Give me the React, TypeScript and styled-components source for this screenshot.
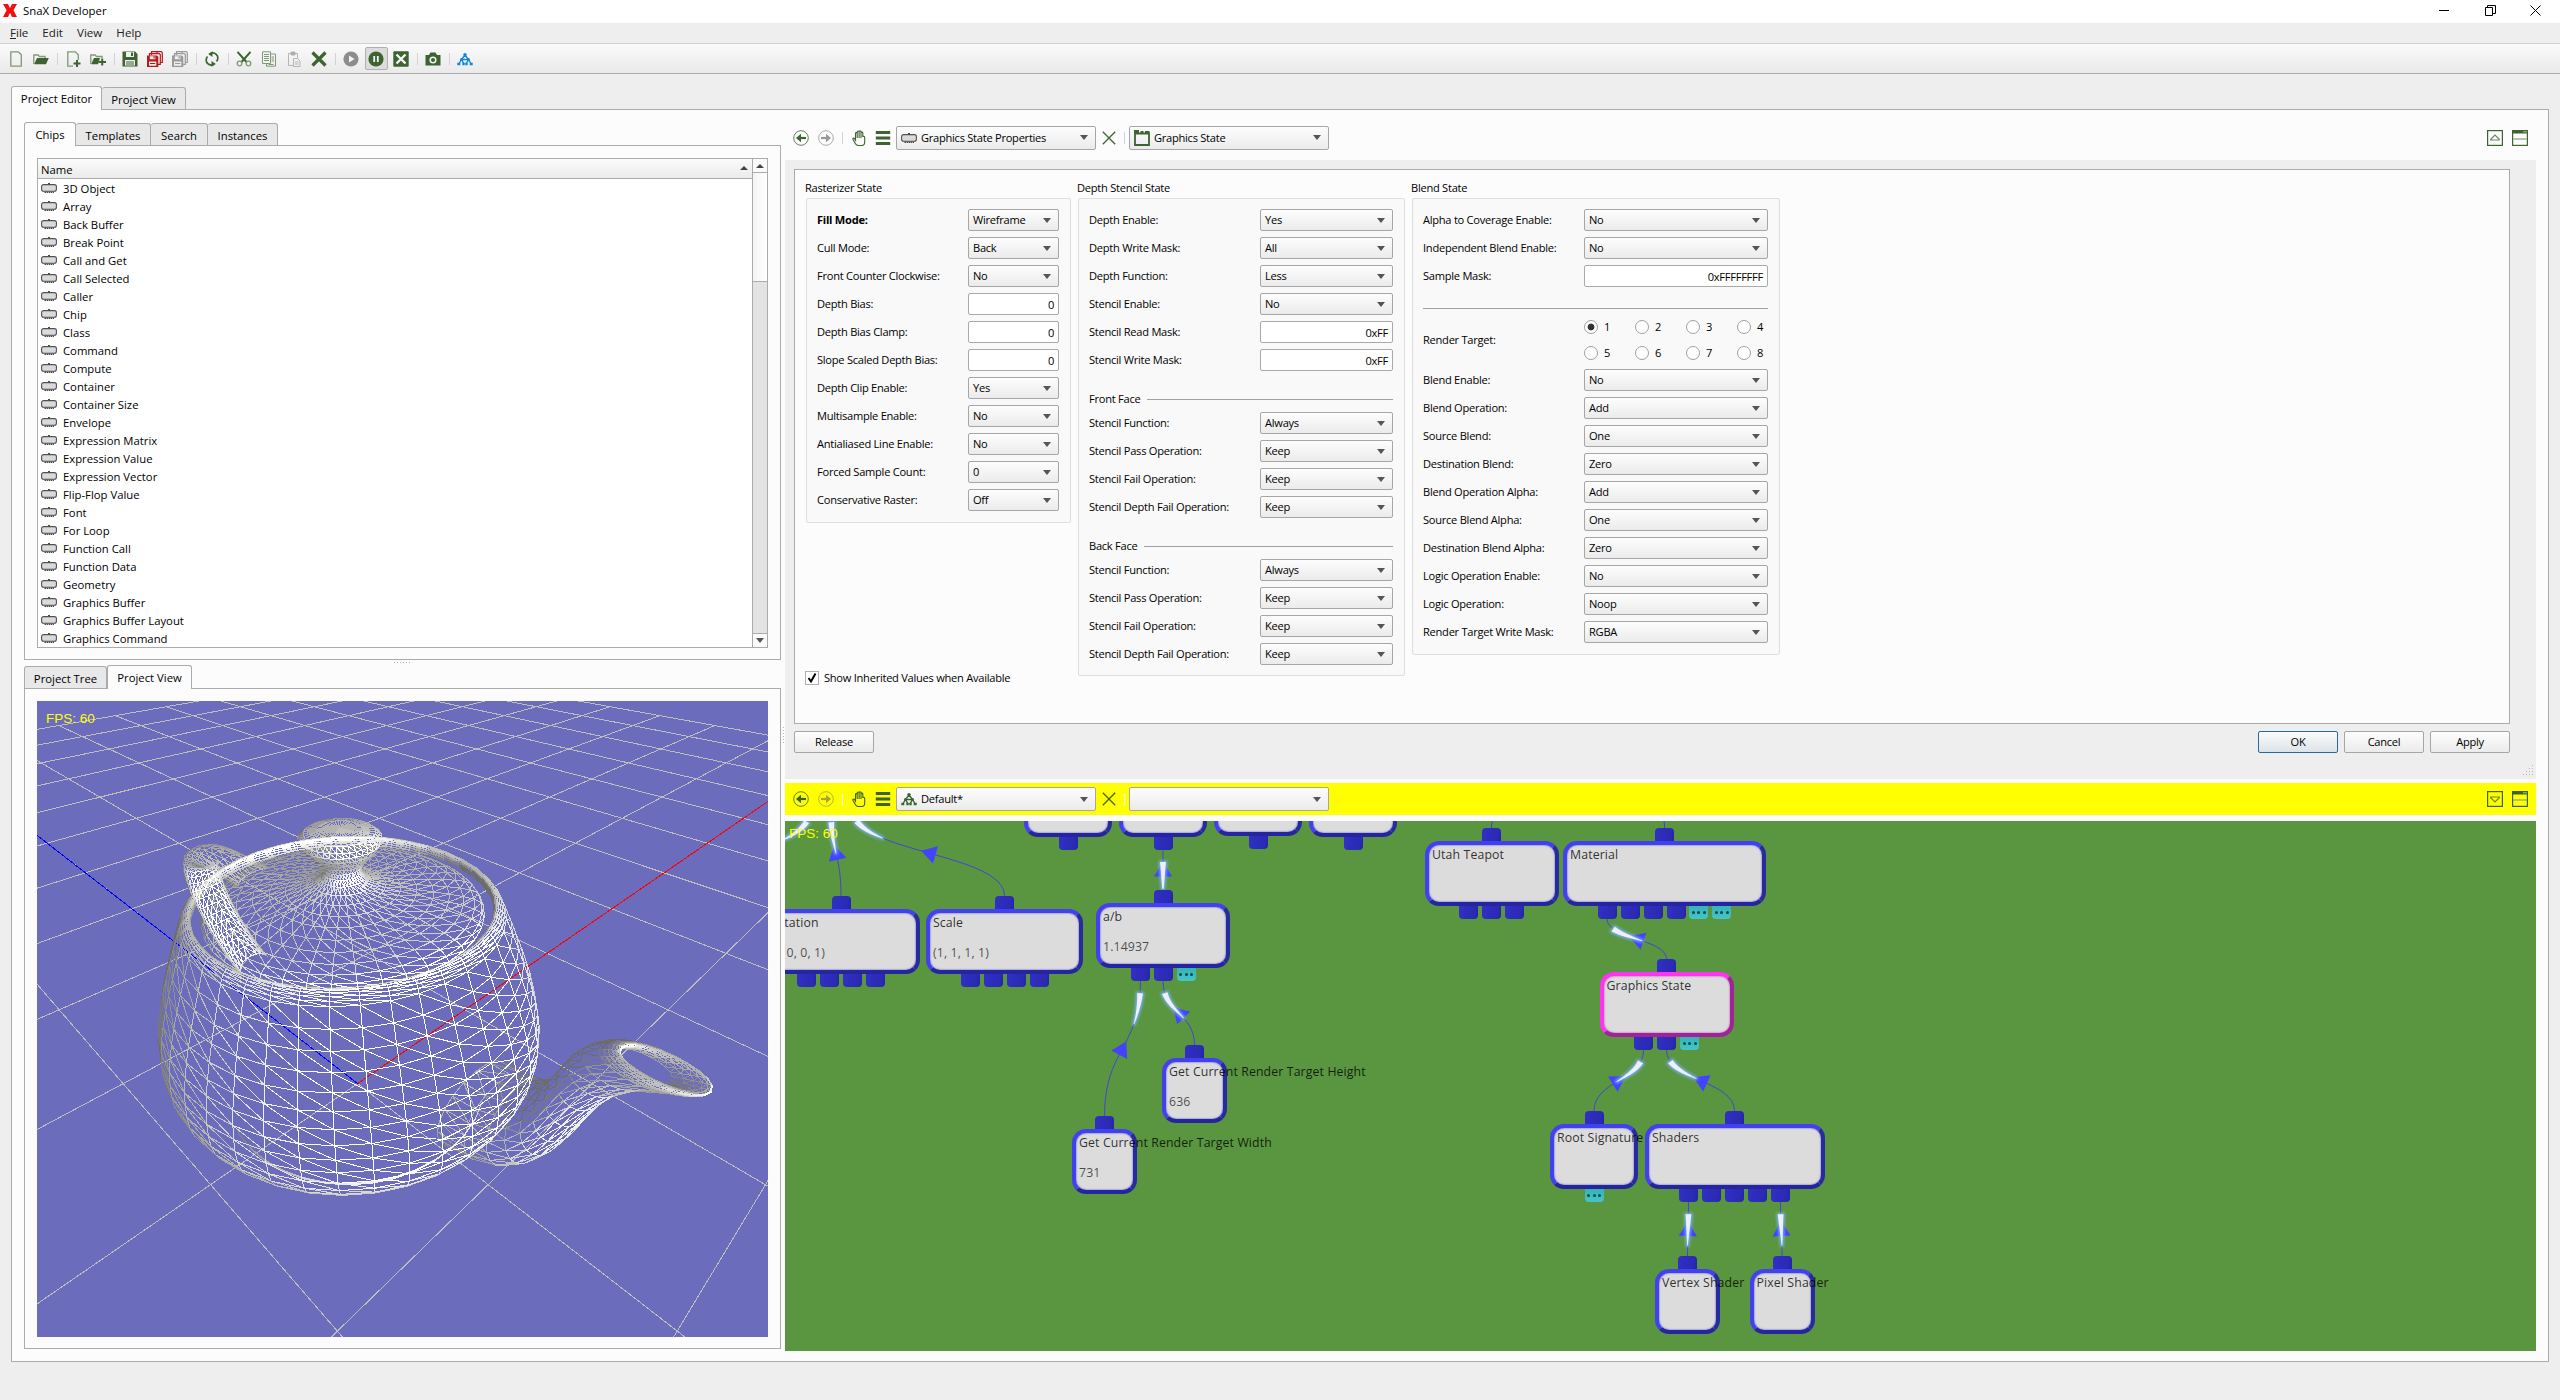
import React from 'react';
import styled, { createGlobalStyle, css } from 'styled-components';

const GREEN = '#3c6330';
const LINE = '#ababab';

const Global = createGlobalStyle`
  body { margin: 0; background: #eeeeee; overflow: hidden; }
  * { box-sizing: border-box; }
`;

const Window = styled.div`
  width: 2560px;
  height: 1400px;
  background: #eeeeee;
  display: flex;
  flex-direction: column;
  font-family: 'Open Sans', 'Noto Sans', sans-serif;
  font-size: 11.3px;
  line-height: 16px;
  color: #000;
  white-space: nowrap;
  overflow: hidden;
`;

const TitleBar = styled.header`
  height: 23px;
  background: #fff;
  display: flex;
  align-items: center;
  padding: 0 19px 2px 3px;
`;
const AppTitle = styled.span`
  margin-left: 6px;
  padding-top: 1px;
  flex: 1;
  font-size: 11.4px;
`;
const Controls = styled.div`
  display: flex;
  gap: 34.5px;
  margin-top: -1px;
`;

const MenuBar = styled.nav`
  height: 20px;
  display: flex;
  gap: 14px;
  padding: 2px 10px 0;
  font-size: 11.6px;
  color: #222;
`;
const MenuItem = styled.span`
  display: block;
  &::first-letter { text-decoration: ${(p: { $mark?: boolean }) => (p.$mark ? 'underline' : 'none')}; }
`;

const ToolBar = styled.div`
  height: 31px;
  border-top: 1px solid #d0d0d0;
  border-bottom: 1px solid ${LINE};
  background: linear-gradient(#fafafa, #eaeaea);
  display: flex;
  align-items: center;
  padding-left: 3.5px;
`;
const ToolSlot = styled.span<{ $on?: boolean }>`
  width: 25px;
  height: 23px;
  display: flex;
  align-items: center;
  justify-content: center;
  ${(p) =>
    p.$on &&
    css`
      width: 23px;
      margin: 0 1px;
      background: #dcdcdc;
      border: 1px solid #b0b0b0;
      border-radius: 2px;
    `}
`;
const ToolSep = styled.i`
  width: 1px;
  height: 12px;
  margin: 0 3px;
  background: #d2d2d2;
`;

const Body = styled.main`
  flex: 1;
  padding: 12px 11px 0 11px;
  display: flex;
  flex-direction: column;
`;
const Tabs = styled.div`
  display: flex;
  align-items: flex-end;
  height: 24px;
  margin-bottom: -1px;
`;
const Tab = styled.div<{ $w: number; $on?: boolean }>`
  width: ${(p) => p.$w}px;
  height: ${(p) => (p.$on ? 24 : 22)}px;
  margin-bottom: ${(p) => (p.$on ? 0 : 1)}px;
  padding-top: ${(p) => (p.$on ? 1 : 2)}px;
  border: 1px solid ${LINE};
  border-bottom: 0;
  border-left-width: ${(p) => (p.$on ? 1 : 0)}px;
  border-radius: 3px 3px 0 0;
  background: ${(p) => (p.$on ? '#fcfcfc' : '#e8e8e8')};
  z-index: ${(p) => (p.$on ? 1 : 0)};
  display: flex;
  align-items: center;
  justify-content: center;
  &:first-child { border-left-width: 1px; }
`;

const MainPane = styled.section`
  width: 2538px;
  height: 1253px;
  border: 1px solid ${LINE};
  background: #fcfcfc;
  display: flex;
`;
const LeftColumn = styled.div`
  width: 757px;
  margin: 12px 4px 0 12px;
  display: flex;
  flex-direction: column;
`;
const TabPane = styled.div<{ $h: number }>`
  height: ${(p) => p.$h}px;
  border: 1px solid ${LINE};
  padding: 12px;
  background: #fcfcfc;
`;
const Dots = styled.div<{ $vertical?: boolean }>`
  width: ${(p) => (p.$vertical ? 1 : 18)}px;
  height: ${(p) => (p.$vertical ? 18 : 1)}px;
  align-self: center;
  background: repeating-linear-gradient(${(p) => (p.$vertical ? 180 : 90)}deg, #b5b5b5 0 1px, transparent 1px 3px);
`;
const PaneSplit = styled.div`
  height: 5px;
  display: flex;
  flex-direction: column;
  justify-content: center;
`;

const Table = styled.div`
  width: 731px;
  height: 490px;
  border: 1px solid ${LINE};
  background: #fff;
  display: flex;
`;
const TableMain = styled.div`
  flex: 1;
  overflow: hidden;
`;
const TableHead = styled.div`
  height: 20px;
  padding: 3px 4px 0 3px;
  display: flex;
  justify-content: space-between;
  border-bottom: 1px solid ${LINE};
  background: linear-gradient(#fbfbfb, #ebebeb);
  svg { margin-top: 4px; }
`;
const TableRow = styled.div`
  height: 18px;
  display: flex;
  align-items: center;
  gap: 6px;
  padding: 2px 0 0 3px;
  svg { margin-bottom: 2px; }
`;
const Scroll = styled.div`
  width: 15px;
  border-left: 1px solid ${LINE};
  background: #e3e3e3;
  display: flex;
  flex-direction: column;
`;
const ScrollButton = styled.div`
  height: 14px;
  background: #fafafa;
  display: flex;
  align-items: center;
  justify-content: center;
  border-bottom: 1px solid ${LINE};
  &:last-child { border-bottom: 0; border-top: 1px solid ${LINE}; }
`;
const ScrollThumb = styled.div`
  height: 109px;
  margin-bottom: auto;
  border-bottom: 1px solid ${LINE};
  background: linear-gradient(90deg, #f4f4f4, #fff);
`;

const SideSplit = styled.div`
  width: 4px;
  margin-left: -4px;
  display: flex;
  align-items: center;
  justify-content: center;
`;
const RightColumn = styled.div`
  width: 1751px;
  display: flex;
  flex-direction: column;
  font-size: 11.1px;
  letter-spacing: -0.26px;
`;
const ColumnGap = styled.div`
  height: 4px;
`;
const EditorBar = styled.div<{ $hot?: boolean }>`
  height: ${(p) => (p.$hot ? 32 : 50)}px;
  padding: ${(p) => (p.$hot ? '0' : '5px')} 8px 0 8px;
  background: ${(p) => (p.$hot ? '#ffff00' : '#fcfcfc')};
  display: flex;
  align-items: center;
`;
const BarIcon = styled.span<{ $gap: number; $before?: number }>`
  display: flex;
  width: 16px;
  margin-left: ${(p) => p.$before ?? 0}px;
  margin-right: ${(p) => p.$gap}px;
`;
const BarSep = styled.i<{ $gap: number; $light?: boolean }>`
  width: 1px;
  height: 12px;
  margin-right: ${(p) => p.$gap}px;
  background: ${(p) => (p.$light ? '#fff' : '#d2d2d2')};
`;

const comboLook = css`
  border: 1px solid #a6a6a6;
  border-radius: 2px;
  background: linear-gradient(#fdfdfd, #ebebeb);
`;
const ComboBox = styled.div<{ $w: number; $h?: number }>`
  ${comboLook}
  width: ${(p) => p.$w}px;
  height: ${(p) => p.$h ?? 22}px;
  padding: 0 7px 0 4px;
  display: flex;
  align-items: center;
  gap: 4px;
  span { flex: 1; }
`;
const Field = styled.div<{ $w: number }>`
  width: ${(p) => p.$w}px;
  height: 22px;
  border: 1px solid #a9a9a9;
  border-radius: 2px;
  background: #fff;
  padding: 3px 4px 0 0;
  text-align: right;
`;
const Push = styled.button<{ $focus?: boolean }>`
  ${comboLook}
  width: 80px;
  height: 22px;
  padding: 0 0 1px;
  font: inherit;
  letter-spacing: inherit;
  color: inherit;
  ${(p) =>
    p.$focus &&
    css`
      border-color: #2a6a99;
      background: linear-gradient(#fafbfc, #dce3e8);
    `}
`;

const Properties = styled.div`
  height: 619px;
  background: #eeeeee;
  padding: 9px 10px 0 9px;
  display: flex;
  flex-direction: column;
`;
const Sheet = styled.div`
  width: 1716px;
  height: 555px;
  border: 1px solid ${LINE};
  background: #fcfcfc;
  padding: 10px 10px 0 11px;
  display: flex;
  align-items: flex-start;
  gap: 7px;
`;
const StackColumn = styled.div`
  height: 506px;
  display: flex;
  flex-direction: column;
  justify-content: space-between;
`;
const Group = styled.div``;
const GroupTitle = styled.div`
  height: 18px;
  line-height: 16px;
  margin-left: -1px;
`;
const GroupBox = styled.div<{ $w: number; $h: number }>`
  width: ${(p) => p.$w}px;
  height: ${(p) => p.$h}px;
  border: 1px solid #dedede;
  border-radius: 2px;
  background: #f9f9f9;
  padding: 10px 11px 0 10px;
  display: flex;
  flex-direction: column;
  gap: 6px;
`;
const Row = styled.div<{ $bold?: boolean; $tall?: boolean }>`
  flex: none;
  height: ${(p) => (p.$tall ? 53 : 22)}px;
  margin-bottom: ${(p) => (p.$tall ? -3 : 0)}px;
  display: flex;
  align-items: center;
  justify-content: space-between;
  font-weight: ${(p) => (p.$bold ? 700 : 400)};
  & > div { font-weight: 400; }
`;
const Divider = styled.div<{ $top: number; $bottom: number }>`
  flex: none;
  height: 16px;
  margin: ${(p) => p.$top}px 0 ${(p) => p.$bottom}px;
  display: flex;
  align-items: center;
  gap: 7px;
  &::after {
    content: '';
    flex: 1;
    border-top: 1px solid #a0a0a0;
  }
`;
const Rule = styled.div`
  flex: none;
  height: 1px;
  margin: 15px 0 -2px;
  background: #a0a0a0;
`;
const Targets = styled.div`
  width: 184px;
  display: grid;
  grid-template-columns: repeat(4, 51px);
  grid-auto-rows: 26px;
`;
const Target = styled.label`
  display: flex;
  align-items: center;
  gap: 6px;
`;
const Radio = styled.i<{ $on?: boolean }>`
  width: 14px;
  height: 14px;
  border: 1px solid #a0a0a0;
  border-radius: 50%;
  background: ${(p) => (p.$on ? 'radial-gradient(circle, #333 0 3px, #fff 3.8px)' : '#fff')};
`;
const CheckLine = styled.label`
  display: flex;
  align-items: center;
  gap: 5px;
  margin-left: -1px;
  height: 16px;
`;
const Check = styled.i`
  width: 14px;
  height: 14px;
  border: 1px solid #b0b0b0;
  background: #fff;
  display: flex;
`;
const Footer = styled.div`
  display: flex;
  gap: 6px;
  padding-top: 7px;
  width: 1716px;
`;
const Spring = styled.i`
  flex: 1;
`;
const Grip = styled.div`
  align-self: flex-end;
  margin: 12px -8px 0 0;
  line-height: 0;
`;

const Scene = styled.div`
  width: 731px;
  height: 636px;
  background: #6c6cbd;
  position: relative;
  svg { display: block; }
`;
const Fps = styled.span<{ $x: number; $y: number }>`
  position: absolute;
  left: ${(p) => p.$x}px;
  top: ${(p) => p.$y}px;
  font: 13.5px/16px 'Liberation Sans', sans-serif;
  letter-spacing: 0;
  color: #ffff00;
`;
const Canvas = styled.div`
  margin-top: 6px;
  width: 1751px;
  height: 530px;
  background: #5a9540;
  position: relative;
  overflow: hidden;
`;
const Wires = styled.svg`
  position: absolute;
  inset: 0;
`;
const Node = styled.div<{ $x: number; $y: number; $w: number; $hot?: boolean }>`
  position: absolute;
  left: ${(p) => p.$x - 785}px;
  top: ${(p) => p.$y - 821}px;
  width: ${(p) => p.$w}px;
  height: 65px;
  border: 4px solid;
  border-color: ${(p) => (p.$hot ? '#fb36ee #a02499 #a02499 #fb36ee' : '#4141f0 #2a2aa0 #2525a0 #4141f0')};
  border-radius: 14px;
  background: #dcdcdc;
  box-shadow: inset 0 0 2px ${(p) => (p.$hot ? '#c020b0' : '#3a3ad0')};
`;
const NodeText = styled.span<{ $row: number }>`
  position: absolute;
  left: 3px;
  top: ${(p) => (p.$row ? 32 : 2)}px;
  font-size: 12.3px;
  letter-spacing: 0.12px;
  color: rgba(0, 0, 0, ${(p) => (p.$row ? 0.68 : 0.8)});
`;
const Port = styled.i<{ $x: number; $y: number; $teal?: boolean; $up?: boolean }>`
  position: absolute;
  left: ${(p) => p.$x - 785 - 9.5}px;
  top: ${(p) => p.$y - 821}px;
  width: 19px;
  height: 14px;
  border-radius: ${(p) => (p.$up ? '4px 4px 0 0' : '0 0 4px 4px')};
  background: ${(p) =>
    p.$teal ? 'linear-gradient(#36b0b4, #45c6c6)' : 'linear-gradient(100deg, #3030c4, #2a2ab4 80%, #2323a0)'};
  display: flex;
  align-items: center;
  justify-content: center;
  gap: 2.5px;
`;
const PortDot = styled.i`
  width: 3px;
  height: 3px;
  border-radius: 50%;
  background: #0a4c55;
`;

/* ---------- icons ---------- */

const Chip = () => (
  <svg width="16" height="10" viewBox="0 0 16 10">
    <path d="M8 0v2" stroke="#111" strokeWidth="1.500" />
    <path d="M3.500 9.200h9.500" stroke="#111" strokeWidth="1.300" strokeDasharray="1.500 .600" />
    <rect x="0.600" y="1.600" width="14.800" height="6.600" rx="2" fill="#dadada" stroke="#505050" strokeWidth="1.100" />
  </svg>
);
const Down = () => (
  <svg width="8" height="5" viewBox="0 0 8 5">
    <path d="M0 0h8L4 5z" fill="#555" />
  </svg>
);
const Up = () => (
  <svg width="8" height="4" viewBox="0 0 8 4">
    <path d="M0 4h8L4 0z" fill="#444" />
  </svg>
);
const Ic = ({ children }: { children: React.ReactNode }) => (
  <svg width="16" height="16" viewBox="0 0 16 16" fill="none" stroke={GREEN} strokeWidth="1.3">
    {children}
  </svg>
);
const Floppy = ({ c, x = 0, y = 0, s = 1 }: { c: string; x?: number; y?: number; s?: number }) => (
  <g transform={`translate(${x} ${y}) scale(${s})`} stroke="none">
    <path d="M0.5 0.5H13l2.5 2.5v12.500h-15z" fill={c} />
    <path d="M4 1h8v5H4zM3 9h10v5.500H3z" fill="#eef2ec" />
    <path d="M9 1.500h2v3.500H9zM4 10.500h8v1H4zM4 12.500h8v1H4z" fill={c} />
  </g>
);
const SaveStack = ({ c }: { c: string }) => (
  <Ic>
    <g stroke={c} strokeWidth="1.200">
      <path d="M4.500 4V.700h9.800l1 1v9.800H13" />
      <path d="M2.500 6V2.600h9.800l1 1v9.800H11" />
      <path d="M10 .700v2" />
    </g>
    <g stroke="none">
      <path d="M0 4.500h10l1.300 1.300V16H0z" fill={c} />
      <path d="M2.800 5.300h5.600v2.900H2.800zM2 10.500h7.300v4.300H2z" fill="#f3eeee" />
      <path d="M6.500 5.300h1.200v2.200H6.500zM3 12h5.300v1H3z" fill={c} />
    </g>
  </Ic>
);
const FolderBody = () => <path d="M.8 13V4h4.500l1 1.500H12V7" stroke="#7f9a74" />;
const Tree = ({ c = '#1387d6' }: { c?: string }) => (
  <Ic>
    <g stroke={c} strokeWidth="1.4">
      <path d="M8 4L4.500 8.500h7zM4.500 8.500L1.800 13M4.500 8.500L7 13M11.500 8.500L9 13M11.500 8.500L14.200 13" />
      <g fill={c} stroke="none">
        <circle cx="8" cy="3.600" r="1.700" />
        <circle cx="4.500" cy="8.500" r="1.500" />
        <circle cx="11.500" cy="8.500" r="1.500" />
        <path d="M.3 11.800h3v2.400h-3zM5.300 11.800h2.400v2.400H5.300zM8.300 11.800h2.400v2.400H8.300zM12.700 11.800h3v2.400h-3z" />
      </g>
    </g>
  </Ic>
);
const Back = ({ c = GREEN, flip }: { c?: string; flip?: boolean }) => (
  <Ic>
    <g stroke={c} transform={flip ? 'translate(16 0) scale(-1 1)' : undefined}>
      <circle cx="8" cy="8" r="7.300" strokeWidth="1" opacity=".8" />
      <path d="M13 8H5" strokeWidth="2.200" />
      <path d="M3 8l5-4.300v8.600z" fill={c} stroke="none" />
    </g>
  </Ic>
);
const Hand = () => (
  <Ic>
    <path
      strokeWidth="1.100"
      d="M4.500 8V3.500c0-1.200 1.700-1.200 1.700 0V2c0-1.300 1.900-1.300 1.900 0v-.3c0-1.300 1.900-1.300 1.900 0V3c0-1.200 1.800-1.200 1.800 0v4c0-1 1.900-1 1.900.2V12c0 2-1 3.500-3 3.500H7.500C6 15.500 5 14.800 4.300 13.500L2 9.500C1.400 8.300 2.800 7.700 3.500 8.600l1 1.500zM6.200 3.500V8M8.100 2v6M10 3v5"
    />
  </Ic>
);
const Lines = () => (
  <Ic>
    <path d="M.8 2.500h14.400M.8 8h14.400M.8 13.500h14.400" strokeWidth="3" />
  </Ic>
);
const Cross = () => (
  <svg width="14" height="14" viewBox="0 0 14 14">
    <path d="M.8.800l12.400 12.400M13.200.800L.8 13.200" stroke={GREEN} strokeWidth="1.300" />
  </svg>
);
const Frame = () => (
  <Ic>
    <path d="M1 3.500V15h14V3.500z" strokeWidth="1.800" />
    <path d="M0 0h5v3h1.500V1h3v2H11V1h4.500v2.500H0z" fill={GREEN} stroke="none" />
  </Ic>
);
const Collapse = ({ down }: { down?: boolean }) => (
  <Ic>
    <rect x=".6" y=".6" width="14.800" height="14.800" strokeWidth="1.200" />
    <path d={down ? 'M3 6h10M3.500 6.500L8 11l4.500-4.500' : 'M3 10h10M3.500 9.500L8 5l4.500 4.500'} strokeWidth="1.200" opacity=".75" />
  </Ic>
);
const WindowIcon = () => (
  <Ic>
    <rect x=".6" y=".6" width="14.800" height="14.800" strokeWidth="1.200" />
    <path d="M0 0h16v3.500H0z" fill={GREEN} stroke="none" />
    <path d="M1 9h14" stroke="#9db38f" strokeWidth="1.500" />
    <path d="M11 1.800h4" stroke="#9db38f" strokeWidth="1.200" />
  </Ic>
);

const toolGroups: React.ReactNode[][] = [
  [
    <Ic><path d="M2.800.800h7.500l3 3v11.400H2.800z" stroke="#7f9a74" /></Ic>,
    <Ic><FolderBody /><path d="M1.200 13.300L4 7h11.800L13 13.300z" fill={GREEN} stroke="none" /></Ic>,
  ],
  [
    <Ic><path d="M8 15.200H2.800V.8h7.500l3 3V9" stroke="#7f9a74" /><path d="M8.500 12.500h7M12 9v7" strokeWidth="2" /></Ic>,
    <Ic><FolderBody /><path d="M1.200 13.300L4 7h6l-2 6.300z" fill={GREEN} stroke="none" /><path d="M8.500 11h7.500M12.200 7.500v7" strokeWidth="2" /></Ic>,
  ],
  [<Ic><Floppy c={GREEN} /></Ic>, <SaveStack c="#b81818" />, <SaveStack c="#9a9a9a" />],
  [
    <Ic>
      <path d="M5 3.600A5 5 0 0 1 12.500 10.500M11 12.400A5 5 0 0 1 3.500 5.500" strokeWidth="1.700" />
      <path d="M8.500 0v6L5 3.500zM7.500 16v-6l3.500 2.500z" fill={GREEN} stroke="none" />
    </Ic>,
  ],
  [
    <Ic>
      <path d="M1.500.800L10.500 11M14.500.800L5.500 11" strokeWidth="2" />
      <circle cx="3.500" cy="12.500" r="2.300" stroke="#7f9a74" />
      <circle cx="12.500" cy="12.500" r="2.300" stroke="#7f9a74" />
    </Ic>,
    <Ic><g stroke="#7f9a74" strokeWidth="1"><path d="M1.500.800h8v11.700h-8zM10 3h4.500v12.200h-9V13M3 3.500h5M3 5.500h5M3 7.500h5M3 9.500h5M10.500 6h2.500M10.500 8h2.500M10.500 10h2.500M7.500 13.500h5" /></g></Ic>,
    <Ic><g stroke="#b4b4b4" strokeWidth="1"><path d="M2.500 2.500h9V7M2.500 2.500v12H7M7.500 7.500h4l2.500 2.500v5.500H7.500zM9 11h3.500M9 13h3.500" /><path d="M5 1h4v3H5z" fill="#a8a8a8" /></g></Ic>,
    <Ic><path d="M1.500 1.500l13 13M14.500 1.500l-13 13" strokeWidth="3.200" /></Ic>,
  ],
  [
    <Ic><circle cx="8" cy="8" r="7.600" fill="#8d8d8d" stroke="none" /><path d="M6 4.500v7L11.500 8z" fill="#f4f4f4" stroke="none" /></Ic>,
    <Ic><circle cx="8" cy="8" r="7.600" fill={GREEN} stroke="none" /><path d="M6.200 5v6M9.800 5v6" stroke="#f4f4f4" strokeWidth="1.800" /></Ic>,
    <Ic><rect x=".3" y=".3" width="15.400" height="15.400" rx="1" fill={GREEN} stroke="none" /><path d="M3.500 3.500l9 9M12.500 3.500l-9 9" stroke="#f4f4f4" strokeWidth="2.400" /></Ic>,
  ],
  [
    <Ic><path d="M.5 4H4l1.500-2.500h5L12 4h3.500v10.500H.5z" fill={GREEN} stroke="none" /><circle cx="8" cy="9" r="2.800" stroke="#f4f4f4" strokeWidth="1.500" /></Ic>,
  ],
  [<Tree />],
];

/* ---------- 3D scene ---------- */

type V3 = [number, number, number];
const W = 731;
const H = 636;
const FOCAL = 579;
const SIN = 0.6428;
const COS = 0.766;
const EYE = 2.544;
const ORIGIN_R = -0.271;
const ORIGIN_F = 2.425;
const Q = Math.SQRT1_2;

const depthOf = ([, f, h]: V3) => f * COS + (EYE - h) * SIN;
const project = (p: V3): [number, number] => {
  const d = depthOf(p);
  return [W / 2 + (FOCAL * p[0]) / d, H / 2 + (FOCAL * ((EYE - p[2]) * COS - p[1] * SIN)) / d];
};
const ground = (x: number, z: number): V3 => [ORIGIN_R + (x - z) * Q, ORIGIN_F + (x + z) * Q, 0];

function segment(a: V3, b: V3): string {
  let p = a;
  let q = b;
  const near = 0.2;
  const cut = (u: V3, v: V3): V3 => {
    const t = (near - depthOf(u)) / (depthOf(v) - depthOf(u));
    return [u[0] + (v[0] - u[0]) * t, u[1] + (v[1] - u[1]) * t, u[2] + (v[2] - u[2]) * t];
  };
  if (depthOf(p) < near && depthOf(q) < near) return '';
  if (depthOf(p) < near) p = cut(p, q);
  else if (depthOf(q) < near) q = cut(q, p);
  const [x1, y1] = project(p);
  const [x2, y2] = project(q);
  return `M${x1.toFixed(1)} ${y1.toFixed(1)}L${x2.toFixed(1)} ${y2.toFixed(1)}`;
}

const SCALE = 0.5;
const toWorld = ([x, y, z]: V3): V3 => [
  ORIGIN_R + SCALE * Q * (x + y),
  ORIGIN_F + SCALE * Q * (y - x),
  SCALE * z,
];

type Patch = { pts: V3[][]; flip: boolean };
const revolve = (profile: [number, number][], flip = false): Patch[] => {
  const k = 0.56;
  return [0, 1, 2, 3].map((n) => {
    const c = Math.round(Math.cos((n * Math.PI) / 2));
    const s = Math.round(Math.sin((n * Math.PI) / 2));
    const arc: [number, number][] = [[1, 0], [1, k], [k, 1], [0, 1]];
    return {
      flip,
      pts: profile.map(([r, z]) => arc.map(([x, y]): V3 => [r * (x * c - y * s), r * (x * s + y * c), z])),
    };
  });
};
const tube = (rows: [number, number, number][][]): Patch[] => [
  { flip: true, pts: rows },
  { flip: false, pts: rows.map((r) => r.map(([x, y, z]): V3 => [x, -y, z])) },
];
const band = (x1: number, z1: number, x2: number, z2: number, w: number): V3[] => [
  [x1, 0, z1], [x1, -w, z1], [x2, -w, z2], [x2, 0, z2],
];
const patches: Patch[] = [
  ...revolve([[1.4, 2.4], [1.3375, 2.53125], [1.4375, 2.53125], [1.5, 2.4]]),
  ...revolve([[1.5, 2.4], [1.75, 1.875], [2, 1.35], [2, 0.9]]),
  ...revolve([[2, 0.9], [2, 0.45], [1.5, 0.225], [1.5, 0.15]]),
  ...revolve([[0, 3.15], [0.8, 3.15], [0, 2.85], [0.2, 2.7]]),
  ...revolve([[0.2, 2.7], [0.4, 2.55], [1.3, 2.55], [1.3, 2.4]]),
  ...revolve([[1.5, 0.15], [1.5, 0.075], [1.425, 0], [0, 0]]),
  ...tube([band(-1.6, 2.025, -1.5, 2.25, 0.3), band(-2.3, 2.025, -2.5, 2.25, 0.3), band(-2.7, 2.025, -3, 2.25, 0.3), band(-2.7, 1.8, -3, 1.8, 0.3)]),
  ...tube([band(-2.7, 1.8, -3, 1.8, 0.3), band(-2.7, 1.575, -3, 1.35, 0.3), band(-2.5, 1.125, -2.65, 0.9375, 0.3), band(-2, 0.9, -1.9, 0.6, 0.3)]),
  ...tube([band(1.7, 1.425, 1.7, 0.6, 0.66), band(2.6, 1.425, 3.1, 0.825, 0.66), band(2.3, 2.1, 2.4, 2.025, 0.25), band(2.7, 2.4, 3.3, 2.4, 0.25)]),
  ...tube([band(2.7, 2.4, 3.3, 2.4, 0.25), band(2.8, 2.475, 3.525, 2.49375, 0.25), band(2.9, 2.475, 3.45, 2.5125, 0.15), band(2.8, 2.4, 3.2, 2.4, 0.15)]),
];

const bern = (t: number) => {
  const m = 1 - t;
  return [m * m * m, 3 * m * m * t, 3 * m * t * t, t * t * t];
};
const LIGHT: V3 = [0.42, -0.8, 0.42];
const DIV = 10;

function teapotPaths(): { shade: number; d: string }[] {
  const buckets = new Map<number, string[]>();
  for (const { pts, flip } of patches) {
    const grid: V3[][] = [];
    for (let i = 0; i <= DIV; i++) {
      const bu = bern(i / DIV);
      const line: V3[] = [];
      for (let j = 0; j <= DIV; j++) {
        const bv = bern(j / DIV);
        const p: V3 = [0, 0, 0];
        for (let a = 0; a < 4; a++)
          for (let b = 0; b < 4; b++)
            for (let c = 0; c < 3; c++) p[c] += bu[a] * bv[b] * pts[a][b][c];
        line.push(toWorld(p));
      }
      grid.push(line);
    }
    const tri = (a: V3, b: V3, c: V3) => {
      const e: V3 = [b[0] - a[0], b[1] - a[1], b[2] - a[2]];
      const f: V3 = [c[0] - a[0], c[1] - a[1], c[2] - a[2]];
      let n: V3 = [e[1] * f[2] - e[2] * f[1], e[2] * f[0] - e[0] * f[2], e[0] * f[1] - e[1] * f[0]];
      const len = Math.hypot(...n);
      if (len < 1e-9) return;
      const sgn = (flip ? -1 : 1) / len;
      n = [n[0] * sgn, n[1] * sgn, n[2] * sgn];
      if (-a[0] * n[0] - a[1] * n[1] + (EYE - a[2]) * n[2] <= 0) return;
      const lit = Math.max(0, n[0] * LIGHT[0] + n[1] * LIGHT[1] + n[2] * LIGHT[2]);
      const shade = Math.min(255, Math.round((112 + lit * 165) / 12) * 12);
      const P = [a, b, c].map(project).map(([x, y]) => `${x.toFixed(1)} ${y.toFixed(1)}`);
      if (!buckets.has(shade)) buckets.set(shade, []);
      buckets.get(shade)!.push(`M${P[0]}L${P[1]}L${P[2]}Z`);
    };
    for (let i = 0; i < DIV; i++)
      for (let j = 0; j < DIV; j++) {
        tri(grid[i][j], grid[i + 1][j], grid[i + 1][j + 1]);
        tri(grid[i][j], grid[i + 1][j + 1], grid[i][j + 1]);
      }
  }
  return [...buckets.entries()].sort((a, b) => a[0] - b[0]).map(([shade, d]) => ({ shade, d: d.join('') }));
}

const gridPath = Array.from({ length: 21 }, (_, i) => i - 10)
  .map((n) => segment(ground(n, -10), ground(n, 10)) + segment(ground(-10, n), ground(10, n)))
  .join('');
const teapot = teapotPaths();

const TeapotScene = () => (
  <Scene>
    <svg width={W} height={H} viewBox={`0 0 ${W} ${H}`} fill="none" shapeRendering="crispEdges">
      <path d={gridPath} stroke="#bdbdbd" />
      <path d={segment(ground(0, 0), ground(10, 0))} stroke="#ff0000" />
      <path d={segment(ground(0, 0), ground(0, 10))} stroke="#0000ff" />
      {teapot.map(({ shade, d }) => (
        <path key={shade} d={d} stroke={`rgb(${shade},${shade},${Math.round(shade * 0.985)})`} />
      ))}
    </svg>
    <Fps $x={9} $y={10}>FPS: 60</Fps>
  </Scene>
);

/* ---------- node graph ---------- */

type NodeData = {
  x: number; y: number; w: number; title?: string; value?: string; hot?: boolean;
  top?: number; ports?: number[]; teal?: number[];
};
const nodes: NodeData[] = [
  { x: 762, y: 909, w: 157.5, title: 'Rotation', value: '(0, 0, 0, 1)', top: 841, ports: [806.5, 829.5, 852.5, 875.5] },
  { x: 926, y: 909, w: 157, title: 'Scale', value: '(1, 1, 1, 1)', top: 1004.5, ports: [970, 993, 1016, 1039] },
  { x: 1024, y: 772, w: 88, ports: [1068] },
  { x: 1119, y: 772, w: 88, ports: [1163] },
  { x: 1214, y: 771, w: 88, ports: [1258] },
  { x: 1309, y: 772, w: 88, ports: [1353] },
  { x: 1096, y: 903, w: 134, title: 'a/b', value: '1.14937', top: 1163, ports: [1140.5, 1163], teal: [1186] },
  { x: 1162, y: 1058, w: 65, title: 'Get Current Render Target Height', value: '636', top: 1194.5 },
  { x: 1072, y: 1129, w: 65, title: 'Get Current Render Target Width', value: '731', top: 1104.5 },
  { x: 1425, y: 841, w: 134, title: 'Utah Teapot', top: 1491.5, ports: [1468.5, 1491.5, 1514.5] },
  { x: 1563, y: 841, w: 203, title: 'Material', top: 1664.5, ports: [1607, 1630, 1653, 1676], teal: [1698.5, 1721.5] },
  { x: 1599.5, y: 972, w: 134, title: 'Graphics State', hot: true, top: 1666.5, ports: [1643.5, 1666.5], teal: [1689.5] },
  { x: 1645, y: 1124, w: 179.5, title: 'Shaders', top: 1734.5, ports: [1688.5, 1711.5, 1734.5, 1757.5, 1780.5] },
  { x: 1550, y: 1124, w: 88, title: 'Root Signature', top: 1594, teal: [1594] },
  { x: 1655, y: 1269, w: 65, title: 'Vertex Shader', top: 1687.5 },
  { x: 1749.5, y: 1269, w: 65, title: 'Pixel Shader', top: 1782 },
];
/* target x, target y, source x, source y */
const links: [number, number, number, number][] = [
  [853, 810, 1004.5, 896],
  [831, 810, 841, 896],
  [810, 810, 690, 896],
  [1163, 850, 1163, 889],
  [1140.5, 981, 1104.5, 1116],
  [1163, 981, 1194.5, 1045],
  [1607, 919, 1666.5, 959],
  [1643.5, 1050, 1594, 1111],
  [1666.5, 1050, 1734.5, 1111],
  [1688.5, 1202, 1687.5, 1256],
  [1780.5, 1202, 1782, 1256],
];

function wire([x1, y1, x2, y2]: [number, number, number, number]) {
  const my = (y1 + y2) / 2;
  const at = (t: number) => {
    const b = bern(t);
    return [b[0] * x1 + b[1] * x1 + b[2] * x2 + b[3] * x2, b[0] * y1 + b[1] * my + b[2] * my + b[3] * y2];
  };
  const samples: number[][] = [];
  let prev = at(0);
  let dist = 0;
  for (let t = 0.005; t <= 1; t += 0.005) {
    const p = at(t);
    const step = Math.hypot(p[0] - prev[0], p[1] - prev[1]);
    dist += step;
    if (dist > 12 && dist < 44) {
      const w = 2.6 * (1 - (dist - 12) / 32) + 0.3;
      const nx = (-(p[1] - prev[1]) / step) * w;
      const ny = ((p[0] - prev[0]) / step) * w;
      samples.push([p[0] + nx, p[1] + ny, p[0] - nx, p[1] - ny]);
    }
    prev = p;
  }
  const glow =
    'M' + samples.map((s) => `${s[0].toFixed(1)} ${s[1].toFixed(1)}`).join('L') +
    'L' + [...samples].reverse().map((s) => `${s[2].toFixed(1)} ${s[3].toFixed(1)}`).join('L') + 'Z';
  const a = at(0.45);
  const b = at(0.55);
  const mid = at(0.5);
  const angle = (Math.atan2(a[1] - b[1], a[0] - b[0]) * 180) / Math.PI;
  return { curve: `M${x1} ${y1}C${x1} ${my} ${x2} ${my} ${x2} ${y2}`, glow, mid, angle };
}

const Graph = () => (
  <Canvas>
    <Wires width="1751" height="530" viewBox="785 821 1751 530" fill="none">
      <defs>
        <filter id="halo" filterUnits="userSpaceOnUse" x="785" y="800" width="1751" height="560">
          <feGaussianBlur stdDeviation="1.6" />
        </filter>
      </defs>
      <path d="M1491.500 828V825L1492.500 821M1664.500 828V825L1664 821" stroke="#4040e0" />
      {links.map(wire).map((l, i) => (
        <g key={i}>
          <path d={l.curve} stroke="#4444d8" />
          <path d="M8 0L-7 -9V9Z" fill="#4343ff" transform={`translate(${l.mid[0]} ${l.mid[1]}) rotate(${l.angle})`} />
          <path d={l.glow} fill="#78b4ff" stroke="#78b4ff" strokeWidth="2.500" filter="url(#halo)" />
          <path d={l.glow} fill="#eeeeff" />
        </g>
      ))}
    </Wires>
    {nodes.map((n, i) => (
      <React.Fragment key={i}>
        {n.top && <Port $x={n.top} $y={n.y - 13} $up />}
        {n.ports?.map((x) => <Port key={x} $x={x} $y={n.y + 64} />)}
        {n.teal?.map((x) => (
          <Port key={x} $x={x} $y={n.y + 64} $teal><PortDot /><PortDot /><PortDot /></Port>
        ))}
        <Node $x={n.x} $y={n.y} $w={n.w} $hot={n.hot}>
          {n.title && <NodeText $row={0}>{n.title}</NodeText>}
          {n.value && <NodeText $row={1}>{n.value}</NodeText>}
        </Node>
      </React.Fragment>
    ))}
    <Fps $x={4} $y={5}>FPS: 60</Fps>
  </Canvas>
);

/* ---------- forms ---------- */

const Combo = ({ w, children }: { w: number; children: string }) => (
  <ComboBox $w={w}><span>{children}</span><Down /></ComboBox>
);
/* A leading "=" marks a value edited in a text field. */
const FormRows = ({ w, rows }: { w: number; rows: [string, string][] }) => (
  <>
    {rows.map(([label, value], i) => (
      <Row key={i} $bold={label === 'Fill Mode:'}>
        {label}
        {value[0] === '=' ? <Field $w={w}>{value.slice(1)}</Field> : <Combo w={w}>{value}</Combo>}
      </Row>
    ))}
  </>
);
const faceRows: [string, string][] = [
  ['Stencil Function:', 'Always'],
  ['Stencil Pass Operation:', 'Keep'],
  ['Stencil Fail Operation:', 'Keep'],
  ['Stencil Depth Fail Operation:', 'Keep'],
];
const chips = [
  '3D Object', 'Array', 'Back Buffer', 'Break Point', 'Call and Get', 'Call Selected', 'Caller', 'Chip', 'Class',
  'Command', 'Compute', 'Container', 'Container Size', 'Envelope', 'Expression Matrix', 'Expression Value',
  'Expression Vector', 'Flip-Flop Value', 'Font', 'For Loop', 'Function Call', 'Function Data', 'Geometry',
  'Graphics Buffer', 'Graphics Buffer Layout', 'Graphics Command',
];

const EditorHeader = ({ hot, icon, name, second }: { hot?: boolean; icon: React.ReactNode; name: string; second?: React.ReactNode }) => (
  <EditorBar $hot={hot}>
    <BarIcon $gap={9}><Back /></BarIcon>
    <BarIcon $gap={8}><Back c={hot ? '#a5a53a' : '#989898'} flip /></BarIcon>
    <BarSep $gap={8} $light={hot} />
    <BarIcon $gap={8}><Hand /></BarIcon>
    <BarIcon $gap={5}><Lines /></BarIcon>
    <ComboBox $w={200} $h={24}>{icon}<span>{name}</span><Down /></ComboBox>
    <BarIcon $gap={6} $before={6}><Cross /></BarIcon>
    <BarSep $gap={4} $light={hot} />
    <ComboBox $w={200} $h={24}>{second}<span>{second ? 'Graphics State' : ''}</span><Down /></ComboBox>
    <Spring />
    <BarIcon $gap={9}><Collapse down={hot} /></BarIcon>
    <BarIcon $gap={0}><WindowIcon /></BarIcon>
  </EditorBar>
);

export default function App() {
  return (
    <Window>
      <Global />
      <TitleBar>
        <svg width="14" height="13" viewBox="0 0 14 13">
          <path d="M0 0h5l2 4 2-4h5l-3.500 6.300L14 13H9L7 8.800 5 13H0l3.600-6.700z" fill="#f01010" />
        </svg>
        <AppTitle>SnaX Developer</AppTitle>
        <Controls>
          <svg width="11" height="11"><path d="M0 5.500h10" stroke="#000" /></svg>
          <svg width="11" height="11" fill="none" stroke="#000"><path d="M.5 2.500h7v8h-7zM2.500 2.500v-2h8v8h-3" /></svg>
          <svg width="11" height="11" stroke="#000"><path d="M.5.500l10 10M10.500.500l-10 10" /></svg>
        </Controls>
      </TitleBar>
      <MenuBar>
        <MenuItem $mark>File</MenuItem>
        <MenuItem>Edit</MenuItem>
        <MenuItem>View</MenuItem>
        <MenuItem>Help</MenuItem>
      </MenuBar>
      <ToolBar>
        {toolGroups.map((g, i) => (
          <React.Fragment key={i}>
            {i > 0 && <ToolSep />}
            {g.map((icon, j) => <ToolSlot key={j} $on={i === 5 && j === 1}>{icon}</ToolSlot>)}
          </React.Fragment>
        ))}
      </ToolBar>
      <Body>
        <Tabs>
          <Tab $w={91} $on>Project Editor</Tab>
          <Tab $w={84}>Project View</Tab>
        </Tabs>
        <MainPane>
          <LeftColumn>
            <Tabs>
              <Tab $w={52} $on>Chips</Tab>
              <Tab $w={75}>Templates</Tab>
              <Tab $w={57}>Search</Tab>
              <Tab $w={70}>Instances</Tab>
            </Tabs>
            <TabPane $h={515}>
              <Table>
                <TableMain>
                  <TableHead>Name<Up /></TableHead>
                  {chips.map((c) => <TableRow key={c}><Chip />{c}</TableRow>)}
                </TableMain>
                <Scroll>
                  <ScrollButton><Up /></ScrollButton>
                  <ScrollThumb />
                  <ScrollButton><Down /></ScrollButton>
                </Scroll>
              </Table>
            </TabPane>
            <PaneSplit><Dots /></PaneSplit>
            <Tabs>
              <Tab $w={83}>Project Tree</Tab>
              <Tab $w={85} $on>Project View</Tab>
            </Tabs>
            <TabPane $h={661}><TeapotScene /></TabPane>
          </LeftColumn>
          <SideSplit><Dots $vertical /></SideSplit>
          <RightColumn>
            <EditorHeader icon={<Chip />} name="Graphics State Properties" second={<Frame />} />
            <Properties>
              <Sheet>
                <StackColumn>
                  <Group>
                    <GroupTitle>Rasterizer State</GroupTitle>
                    <GroupBox $w={265} $h={325}>
                      <FormRows w={91} rows={[
                        ['Fill Mode:', 'Wireframe'], ['Cull Mode:', 'Back'], ['Front Counter Clockwise:', 'No'],
                        ['Depth Bias:', '=0'], ['Depth Bias Clamp:', '=0'], ['Slope Scaled Depth Bias:', '=0'],
                        ['Depth Clip Enable:', 'Yes'], ['Multisample Enable:', 'No'], ['Antialiased Line Enable:', 'No'],
                        ['Forced Sample Count:', '0'], ['Conservative Raster:', 'Off'],
                      ]} />
                    </GroupBox>
                  </Group>
                  <CheckLine>
                    <Check><svg width="12" height="12"><path d="M2.500 6L5 9.500 9.500 1.500" fill="none" stroke="#000" strokeWidth="2" /></svg></Check>
                    Show Inherited Values when Available
                  </CheckLine>
                </StackColumn>
                <Group>
                  <GroupTitle>Depth Stencil State</GroupTitle>
                  <GroupBox $w={327} $h={478}>
                    <FormRows w={133} rows={[
                      ['Depth Enable:', 'Yes'], ['Depth Write Mask:', 'All'], ['Depth Function:', 'Less'],
                      ['Stencil Enable:', 'No'], ['Stencil Read Mask:', '=0xFF'], ['Stencil Write Mask:', '=0xFF'],
                    ]} />
                    <Divider $top={14} $bottom={-1}>Front Face</Divider>
                    <FormRows w={133} rows={faceRows} />
                    <Divider $top={14} $bottom={-1}>Back Face</Divider>
                    <FormRows w={133} rows={faceRows} />
                  </GroupBox>
                </Group>
                <Group>
                  <GroupTitle>Blend State</GroupTitle>
                  <GroupBox $w={368} $h={457}>
                    <FormRows w={184} rows={[
                      ['Alpha to Coverage Enable:', 'No'], ['Independent Blend Enable:', 'No'], ['Sample Mask:', '=0xFFFFFFFF'],
                    ]} />
                    <Rule />
                    <Row $tall>
                      Render Target:
                      <Targets>
                        {[1, 2, 3, 4, 5, 6, 7, 8].map((n) => <Target key={n}><Radio $on={n === 1} />{n}</Target>)}
                      </Targets>
                    </Row>
                    <FormRows w={184} rows={[
                      ['Blend Enable:', 'No'], ['Blend Operation:', 'Add'], ['Source Blend:', 'One'], ['Destination Blend:', 'Zero'],
                      ['Blend Operation Alpha:', 'Add'], ['Source Blend Alpha:', 'One'], ['Destination Blend Alpha:', 'Zero'],
                      ['Logic Operation Enable:', 'No'], ['Logic Operation:', 'Noop'], ['Render Target Write Mask:', 'RGBA'],
                    ]} />
                  </GroupBox>
                </Group>
              </Sheet>
              <Footer>
                <Push>Release</Push>
                <Spring />
                <Push $focus>OK</Push>
                <Push>Cancel</Push>
                <Push>Apply</Push>
              </Footer>
              <Grip>
                <svg width="11" height="11" fill="#b5b5b5">
                  <path d="M9 0h1v1H9zM9 3h1v1H9zM6 3h1v1H6zM9 6h1v1H9zM6 6h1v1H6zM3 6h1v1H3zM9 9h1v1H9zM6 9h1v1H6zM3 9h1v1H3zM0 9h1v1H0z" />
                </svg>
              </Grip>
            </Properties>
            <ColumnGap />
            <EditorHeader hot icon={<Tree c={GREEN} />} name="Default*" />
            <Graph />
          </RightColumn>
        </MainPane>
      </Body>
    </Window>
  );
}
